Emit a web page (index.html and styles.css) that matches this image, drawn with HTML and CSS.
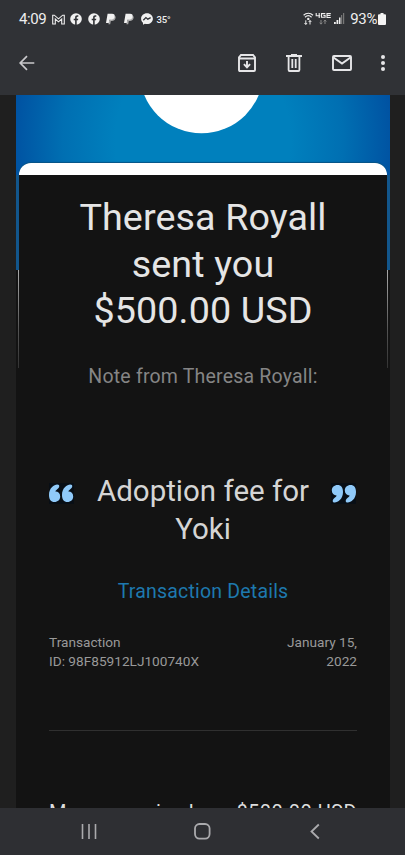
FILE: index.html
```
<!DOCTYPE html>
<html lang="en">
<head>
<meta charset="utf-8">
<title>Mail</title>
<link rel="stylesheet" href="styles.css">
</head>
<body>
<div class="phone">
  <header class="top">
    <div class="status">
      <span class="time">4:09</span>
      <svg class="s-gmail" width="13" height="11" viewBox="0 0 13 11"><path d="M.7 10V1.200h1.600l4.200 3.600 4.200-3.600h1.600V10h-2.600V5L6.500 7.800 3.300 5v5z" fill="none" stroke="#eee" stroke-width="1.100"/></svg>
      <svg class="s-icon" width="12" height="12" viewBox="0 0 12 12"><circle cx="6" cy="6" r="5.800" fill="#f1f1f1"/><path d="M5.100 12V7.300H3.700V5.700h1.400V4.500c0-1.500.8-2.200 2.100-2.200h1.100v1.400h-.8c-.6 0-.8.300-.8.900v1.100h1.600L8 7.300H6.700V12z" fill="#303236"/></svg>
      <svg class="s-icon" width="12" height="12" viewBox="0 0 12 12"><circle cx="6" cy="6" r="5.800" fill="#f1f1f1"/><path d="M5.100 12V7.300H3.700V5.700h1.400V4.500c0-1.500.8-2.200 2.100-2.200h1.100v1.400h-.8c-.6 0-.8.300-.8.900v1.100h1.600L8 7.300H6.700V12z" fill="#303236"/></svg>
      <svg class="s-icon" width="12" height="12" viewBox="0 0 12 12"><path d="M10.100 3c.6.700.6 1.500.4 2.300-.5 1.900-1.800 2.600-3.600 2.600H5.800l-.6 3.400H3.400L4.200 7.500z" fill="#aaa"/><path d="M2.600.8H7c2.200 0 3.100 1.200 2.700 3-.4 2.100-1.900 3-4 3H4.400L3.800 10H1z" fill="#f1f1f1"/></svg>
      <svg class="s-icon" width="12" height="12" viewBox="0 0 12 12"><path d="M10.100 3c.6.700.6 1.500.4 2.300-.5 1.900-1.800 2.600-3.600 2.600H5.800l-.6 3.400H3.400L4.200 7.500z" fill="#aaa"/><path d="M2.600.8H7c2.200 0 3.100 1.200 2.700 3-.4 2.100-1.900 3-4 3H4.400L3.800 10H1z" fill="#f1f1f1"/></svg>
      <svg class="s-icon" width="12" height="12" viewBox="0 0 12 12"><path d="M6 .2C2.600.2.100 2.600.100 5.700c0 1.700.7 3.100 1.900 4.100v2l1.900-1c.7.200 1.300.3 2.100.3 3.400 0 5.900-2.400 5.900-5.400S9.400.2 6 .2z" fill="#f1f1f1"/><path d="M2.300 7.300l2.600-2.700 1.900 1.600 2.900-1.500" fill="none" stroke="#303236" stroke-width="1.300"/></svg>
      <span class="temp">35°</span>
      <span class="grow"></span>
      <svg class="signals" width="42" height="14" viewBox="0 0 42 14">
        <g fill="none" stroke="#eee" stroke-width="1.200"><path d="M.6 3.200c2.700-2.600 6.700-2.600 9.400 0M2 5.200c2-1.800 4.600-1.800 6.600 0"/><path d="M2.800 8.300v4M1.500 11l1.300 1.500L4.100 11M7 12.500v-4M5.700 10L7 8.500 8.300 10" stroke-width="1"/></g><circle cx="5.300" cy="6.900" r="1.200" fill="#eee"/>
        <g fill="none" stroke="#eee" stroke-width="1.100"><path d="M13.200 1v2.700h4M16.200 1v5M22.300 1.600h-3.800v3.700h3.600V3.500h-1.700M24 1v5M27.800 1.600H24M27.500 3.500H24M27.800 5.500H24"/></g>
        <path d="M18 8v4M16.700 10.700L18 12.200l1.300-1.500M22 12V8M20.700 9.500L22 8l1.300 1.500" fill="none" stroke="#888" stroke-width="1"/>
        <path d="M31 10h1.800v2H31zM33.500 8h1.800v4h-1.800zM36 5.500h1.500V12H36z" fill="#eee"/><path d="M38 3h1.200v9H38zM40 1h1.200v11H40z" fill="#777"/>
      </svg>
      <span class="pct">93%</span>
      <svg class="battery" width="8" height="12" viewBox="0 0 8 12"><path d="M2.500 0h3v1.200H7q1 0 1 1V11q0 1-1 1H1q-1 0-1-1V2.200q0-1 1-1h1.500z" fill="#f4f4f4"/></svg>
    </div>
    <div class="toolbar">
      <svg width="16" height="16" viewBox="0 0 16 16"><path d="M15.300 8H1.500M8 1.200L1.200 8 8 14.800" fill="none" stroke="#c9c9cc" stroke-width="1.700"/></svg>
      <span class="grow"></span>
      <svg class="t-archive" width="18" height="18" viewBox="0 0 18 18"><path d="M3 1h12l2 2.400V16q0 1-1 1H2q-1 0-1-1V3.400zM1 4.500h16" fill="none" stroke="#e6e6e8" stroke-width="1.900"/><path d="M9 7v6M5.900 10.200L9 13.300l3.100-3.100" fill="none" stroke="#e6e6e8" stroke-width="1.900"/></svg>
      <svg class="t-trash" width="16" height="18" viewBox="0 0 16 18"><path d="M0 2h16M5 1h6M2.600 2v14q0 1 1 1h8.800q1 0 1-1V2M6.300 5v9M9.700 5v9" fill="none" stroke="#e6e6e8" stroke-width="1.800"/></svg>
      <svg class="t-mail" width="20" height="16" viewBox="0 0 20 16"><rect x="1" y="1" width="18" height="14" rx="1" fill="none" stroke="#e6e6e8" stroke-width="1.900"/><path d="M1.500 2.500L10 8.500l8.500-6" fill="none" stroke="#e6e6e8" stroke-width="2"/></svg>
      <svg class="t-more" width="4" height="16" viewBox="0 0 4 16"><g fill="#e6e6e8"><circle cx="2" cy="2" r="2"/><circle cx="2" cy="8" r="2"/><circle cx="2" cy="14" r="2"/></g></svg>
    </div>
  </header>
  <main class="mail">
    <div class="hero">
      <svg class="logo" width="122" height="39" viewBox="0 0 122 39"><circle cx="60.500" cy="-23.700" r="62" fill="#fff"/></svg>
      <div class="cap"></div>
    </div>
    <div class="content">
      <div class="rail"><i class="blue"></i><i class="thin"></i></div>
      <div class="body">
        <h1>Theresa Royall<br>sent you<br>$500.00 USD</h1>
        <p class="note">Note from Theresa Royall:</p>
        <div class="quote">
          <svg width="25" height="21" viewBox="0 0 25 21"><path d="M0 0h25v21H0z" fill="#080e15"/><g id="pair" fill="#90caf9"><path d="M10 2C7.500.1 0 3.500 0 12c0 4.500 2 7 5.400 7s5.800-2.300 5.800-5.500-2.200-5-4.800-4.900C6.600 6.500 11.400 5.400 10 2z"/><path d="M23 2c-2.500-1.900-10 1.500-10 10 0 4.500 2 7 5.400 7s5.800-2.300 5.800-5.500-2.200-5-4.800-4.900c.2-2.100 5-3.200 3.600-6.600z"/></g></svg>
          <p>Adoption fee for<br>Yoki</p>
          <svg class="close" width="25" height="21" viewBox="0 0 25 21"><path d="M0 0h25v21H0z" fill="#080e15"/><use href="#pair" transform="rotate(180 12.500 10.500)"/></svg>
        </div>
        <a class="details">Transaction Details</a>
        <div class="meta"><span>Transaction<br>ID: 98F85912LJ100740X</span><span class="date">January 15,<br>2022</span></div>
        <hr>
        <div class="money"><span>Money received</span><span class="amount">$500.00 USD</span></div>
      </div>
      <div class="rail right"><i class="blue"></i><i class="thin"></i></div>
    </div>
  </main>
  <nav class="nav">
    <svg width="16" height="17" viewBox="0 0 16 17"><path d="M1.500 1v15M8 1v15M14.500 1v15" stroke="#aaaaad" stroke-width="1.600" fill="none"/></svg>
    <svg class="n-home" width="17" height="17" viewBox="0 0 17 17"><rect x="1" y="1" width="14.600" height="14.600" rx="4.500" fill="none" stroke="#aaaaad" stroke-width="1.800"/></svg>
    <svg class="n-back" width="10" height="17" viewBox="0 0 10 17"><path d="M8.800 1.500L1.500 8.500l7.300 7" fill="none" stroke="#aaaaad" stroke-width="1.800"/></svg>
  </nav>
</div>
</body>
</html>
```
FILE: styles.css
```
* { box-sizing: border-box; }
body { margin: 0; background: #1f1f1f; font-family: Roboto, sans-serif; }
h1, p { margin: 0; font-weight: 400; }
svg { display: block; flex: none; }
.phone { width: 405px; height: 855px; display: flex; flex-direction: column; overflow: hidden; }
.grow { flex: 1; }
.top { height: 95px; flex: none; background: #303236; }
.status { height: 38px; display: flex; align-items: center; padding: 0 19px 0 19px; color: #eee; white-space: nowrap; }
.time { width: 33px; font-size: 15px; line-height: 18px; letter-spacing: -.4px; }
.s-gmail { margin-right: 5px; }
.s-icon { margin-right: 5.700px; }
.temp { font-size: 9.500px; font-weight: 500; margin-left: -2px; letter-spacing: -.1px; }
.pct { font-size: 15px; letter-spacing: -.4px; margin: 0 1px 0 5px; }
.toolbar { height: 50px; display: flex; align-items: center; padding: 0 20px 0 19px; }
.t-archive { margin-right: 30px; }
.t-trash { margin-right: 30px; }
.t-mail { margin-right: 29px; }
.mail { flex: 1; min-height: 0; overflow: hidden; margin: 0 15px 0 16px; background: #131313; }
.hero { height: 80px; display: flex; flex-direction: column; align-items: center; justify-content: space-between; background: radial-gradient(ellipse 195px 210px at 50% 45px, #0080bd 0 45%, #006fb2 72%, #004fa0 100%); }
.logo { margin-right: 3px; }
.cap { width: 368px; height: 12px; border-radius: 12px 12px 0 0; background: #fff; box-shadow: 0 -1px 1px #075486; }
.content { display: flex; height: 700px; }
.rail { width: 4px; flex: none; display: flex; flex-direction: column; align-items: center; }
.blue { width: 3px; height: 95px; background: #12568c; align-self: flex-start; }
.right .blue { align-self: flex-end; }
.thin { width: 1px; height: 98px; background: linear-gradient(#aaa, #555 60%, #333); }
.right .thin { align-self: flex-start; margin-left: 1px; }
.body { flex: 1; padding: 19px 29px 0; display: flex; flex-direction: column; }
h1 { color: #e5e5e5; font-size: 37.700px; line-height: 46.500px; text-align: center; letter-spacing: .1px; }
.note { margin-top: 31px; color: #858585; font-size: 19.500px; line-height: 24px; text-align: center; letter-spacing: .2px; }
.quote { margin-top: 83.500px; height: 76px; display: flex; justify-content: space-between; color: #d5d5d5; font-size: 29.500px; line-height: 38px; text-align: center; white-space: nowrap; }
.quote svg { margin-top: 10.500px; }
.quote .close { margin-right: 1px; margin-left: -1px; }
.details { margin-top: 31.500px; color: #1e79ae; font-size: 19.500px; line-height: 24px; text-align: center; letter-spacing: .2px; }
.meta { margin-top: 29px; display: flex; justify-content: space-between; color: #999; font-size: 13.650px; line-height: 19px; }
.date { text-align: right; }
hr { width: 100%; height: 1px; border: 0; margin: 59px 0 0; background: #303030; }
.money { margin-top: 69px; display: flex; justify-content: space-between; color: #ddd; font-size: 20px; line-height: 24px; letter-spacing: .4px; white-space: nowrap; }
.amount { letter-spacing: .45px; }
.nav { height: 47px; flex: none; background: #2e2f33; display: flex; align-items: center; padding-left: 81px; }
.n-home { margin-left: 97px; }
.n-back { margin-left: 99px; }
```
